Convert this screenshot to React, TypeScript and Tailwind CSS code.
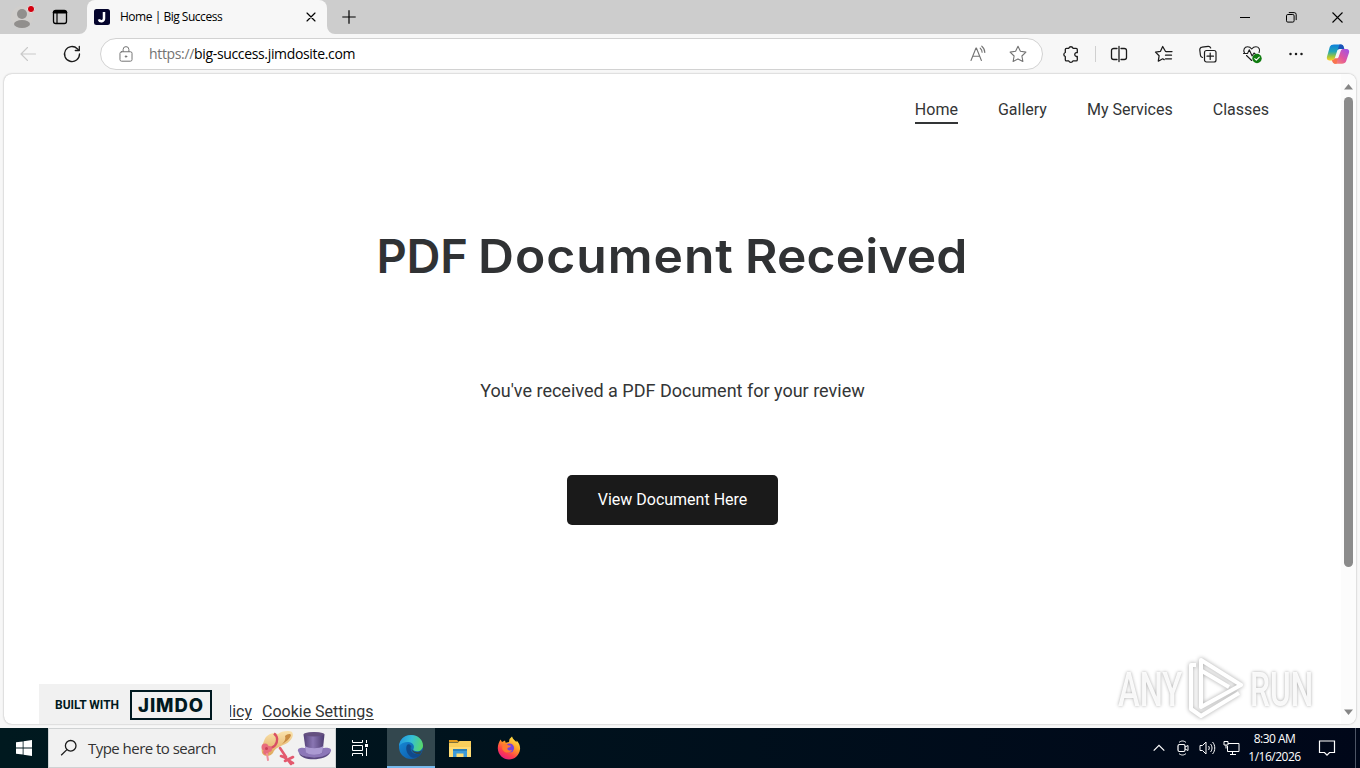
import React from 'react';

interface NavItem {
    label: string;
    active?: boolean;
}

const navItems: NavItem[] = [
    { label: 'Home', active: true },
    { label: 'Gallery' },
    { label: 'My Services' },
    { label: 'Classes' },
];

interface IconProps {
    children: React.ReactNode;
    size?: number;
    className?: string;
}

// Thin outlined icon on a 20px grid
const Icon: React.FC<IconProps> = ({ children, size = 20, className = '' }) => (
    <svg
        width={size}
        height={size}
        viewBox="0 0 20 20"
        fill="none"
        stroke="currentColor"
        strokeWidth="1.1"
        strokeLinecap="round"
        strokeLinejoin="round"
        className={`shrink-0 ${className}`}
    >
        {children}
    </svg>
);

const TitleBar: React.FC = () => (
    <div className="flex h-[34px] bg-[#cdcdcd] text-black">
        <div className="flex w-[87px] items-center">
            <svg width="44" height="34" viewBox="0 0 44 34" className="shrink-0">
                <circle cx="22" cy="17" r="11" fill="#d0cecc" />
                <circle cx="22" cy="14" r="5" fill="#918f8d" />
                <ellipse cx="22" cy="24" rx="8" ry="4" fill="#918f8d" />
                <circle cx="31" cy="9" r="3.6" fill="#d3000f" stroke="#e6e0df" strokeWidth="1" />
            </svg>
            <Icon className="ml-[6px]">
                <rect x="3.5" y="3.5" width="13" height="13" rx="2.2" strokeWidth="1.3" />
                <path d="M4 5.3h12" strokeWidth="2.4" />
                <path d="M7 6v10" strokeWidth="1.2" />
            </Icon>
        </div>
        <div className="relative flex w-[240px] items-center rounded-t-lg bg-[#f7f7f7] pl-[7px]">
            <svg width="8" height="8" viewBox="0 0 8 8" className="absolute -left-2 bottom-0">
                <path d="M8 0v8H0a8 8 0 0 0 8-8z" fill="#f7f7f7" />
            </svg>
            <svg width="8" height="8" viewBox="0 0 8 8" className="absolute -right-2 bottom-0">
                <path d="M0 0v8h8a8 8 0 0 1-8-8z" fill="#f7f7f7" />
            </svg>
            <svg width="16" height="16" viewBox="0 0 16 16" className="shrink-0">
                <rect width="16" height="16" rx="2.5" fill="#05052d" />
                <path d="M10 3v6.6a2.6 2.6 0 0 1-5.1.7" fill="none" stroke="#fff" strokeWidth="2.5" />
            </svg>
            <span className="ml-[10px] w-[180px] font-['Open_Sans',sans-serif] text-[12px] leading-4 tracking-[-0.48px] whitespace-nowrap">Home | Big Success</span>
            <Icon size={10} className="ml-[6px]">
                <path d="M2 2l16 16M18 2L2 18" strokeWidth="2.3" />
            </Icon>
        </div>
        <div className="flex w-[43px] items-center justify-center">
            <svg width="14" height="14" viewBox="0 0 14 14" stroke="currentColor" strokeWidth="1.2">
                <path d="M7 .3v13.4M.3 7h13.4" />
            </svg>
        </div>
        <div className="ml-auto flex">
            <div className="flex w-[46px] items-center justify-center">
                <svg width="10" height="10" viewBox="0 0 10 10"><path d="M0 5.5h10" stroke="#000" /></svg>
            </div>
            <div className="flex w-[46px] items-center justify-center">
                <svg width="11" height="11" viewBox="0 0 11 11" fill="none" stroke="#000">
                    <rect x=".5" y="2.5" width="7.6" height="7.6" rx="1.3" />
                    <path d="M2.8.6h5.4a2 2 0 0 1 2 2v5.5" />
                </svg>
            </div>
            <div className="flex w-[46px] items-center justify-center">
                <svg width="11" height="11" viewBox="0 0 11 11" stroke="#000" strokeWidth="1.1"><path d="M.5.5l10 10M10.5.5l-10 10" /></svg>
            </div>
        </div>
    </div>
);

const CopilotLogo: React.FC = () => (
    <svg width="24" height="22" viewBox="0 0 24 24" preserveAspectRatio="none">
        <defs>
            <linearGradient id="cpA" x1="0" y1="0" x2="0" y2="1">
                <stop offset="0" stopColor="#0d7fdd" />
                <stop offset=".45" stopColor="#24a7b5" />
                <stop offset=".75" stopColor="#9dc63c" />
                <stop offset="1" stopColor="#ffd02a" />
            </linearGradient>
            <linearGradient id="cpB" x1="1" y1="0" x2="0" y2="1">
                <stop offset="0" stopColor="#9a52ee" />
                <stop offset=".5" stopColor="#e0559f" />
                <stop offset="1" stopColor="#ff9461" />
            </linearGradient>
        </defs>
        <path d="M8 1.5h7c1.3 0 2 .8 2.4 2l.9 3h-4.7c-1.3 0-2 .7-2.4 2L8.7 17c-.5 1.5-1.5 2-3 2H3.300C1 19 .5 17 1 15L3.800 4.200C4.300 2.400 6 1.500 8 1.500z" fill="url(#cpA)" />
        <path d="M13.500 1.500H15c1.300 0 2 .8 2.400 2l.9 3h-4.700c-.9 0-1.600.4-2 1.200z" fill="#1b52b8" />
        <path d="M16 22.500H9c-1.300 0-2-.8-2.400-2L6 18.800c1.400 0 2.300-.6 2.700-1.800h1.600c1.300 0 2-.7 2.400-2l2-6.300c.5-1.500 1.500-2.200 3-2.200h2.800c2.400 0 3 2 2.500 4l-2.800 9c-.6 2-2.200 3-4.200 3z" fill="url(#cpB)" />
        <path d="M10.500 22.500H9c-1.300 0-2-.8-2.400-2L6 18.800c1.400 0 2.300-.6 2.700-1.800h3.100z" fill="#f9744f" />
    </svg>
);

const Toolbar: React.FC = () => (
    <div className="flex h-[40px] items-center bg-[#f7f7f7] text-[#1b1b1b]">
        <div className="flex w-[56px] justify-center text-[#c9c9c9]">
            <Icon>
                <path d="M17.500 10H3M9.500 3.500L3 10l6.500 6.500" />
            </Icon>
        </div>
        <div className="flex w-[44px] pl-[6px]">
            <Icon>
                <path d="M17.500 10a7.500 7.500 0 1 1-2.200-5.300L17 6.400" strokeWidth="1.300" />
                <path d="M17.300 2.500v4h-4" strokeWidth="1.300" />
            </Icon>
        </div>
        <div className="flex h-[32px] w-[943px] items-center rounded-full border border-[#d2d2d2] bg-white pl-[16px] text-[#737373]">
            <Icon size={18}>
                <rect x="3.300" y="7.500" width="13.400" height="10.500" rx="1.800" />
                <path d="M6.800 7.200V5a3.200 3.200 0 0 1 6.400 0v2.200" />
                <circle cx="10" cy="12.800" r=".8" fill="currentColor" />
            </Icon>
            <div className="ml-[14px] font-['Open_Sans',sans-serif] text-[14px] leading-5 tracking-[-0.34px] whitespace-nowrap">
                https://<span className="text-black">big-success.jimdosite.com</span>
            </div>
            <div className="ml-auto flex items-center gap-5 pr-[14px]">
                <Icon>
                    <path d="M3 16.500L8 4h.4l5 12.500M4.800 12.300h6.800" />
                    <path d="M12.200 4.200c1.300 1 1.900 2.300 1.900 4M13.800 2.200c2 1.600 3 3.700 3 6.300" />
                </Icon>
                <Icon>
                    <path d="M10 2.300l2.400 5 5.500.8-4 3.900 1 5.500-4.900-2.600-4.900 2.600 1-5.500-4-3.900 5.500-.8z" />
                </Icon>
            </div>
        </div>
        <div className="ml-[6px] flex w-[46px] pl-[12px]">
            <Icon>
                <path d="M5.500 4.300h2.300a2.200 2.200 0 0 1 4.200 0h3.100c.7 0 1.200.5 1.200 1.200v3.200h-1.200a2 2 0 0 0 0 3.800h1.200v3.200c0 .7-.5 1.200-1.200 1.200h-3.200a2.200 2.200 0 0 1-4.100 0H5.500c-.7 0-1.200-.5-1.200-1.200v-3.200a2.100 2.100 0 0 1 0-4V5.500c0-.7.5-1.200 1.200-1.200z" strokeWidth="1.300" />
            </Icon>
        </div>
        <div className="h-4 w-px bg-[#d0d0d0]" />
        <div className="flex w-[46px] justify-center">
            <Icon>
                <path d="M8 4.500H4.800C3.500 4.500 2.500 5.300 2.500 6.500v7c0 1.200 1 2 2.300 2H8M12 4.500h3.200c1.300 0 2.300.8 2.300 2v7c0 1.200-1 2-2.300 2H12M10 2.500v15" strokeWidth="1.300" />
            </Icon>
        </div>
        <div className="flex w-[44px] justify-center">
            <Icon>
                <path d="M12.800 7.500l-1.400-.2L8.700 2.500 6.500 7.300l-5 .8 3.600 3.700-.8 5.400 4.400-2.400 1.500.8" strokeWidth="1.250" />
                <path d="M12 7.500h6M11.500 11.200h6M11.500 14.800h6" strokeWidth="1.250" />
            </Icon>
        </div>
        <div className="flex w-[44px] justify-center">
            <Icon>
                <rect x="6.500" y="6.500" width="11.500" height="11.500" rx="2" strokeWidth="1.200" />
                <path d="M4.500 13.500A2.800 2.800 0 0 1 2.400 11L1.800 6a2.600 2.600 0 0 1 2.300-2.900l6-.8c1.200-.1 2.100.5 2.600 1.700M12.200 9v6.500M9 12.200h6.500" strokeWidth="1.200" />
            </Icon>
        </div>
        <div className="flex w-[44px] justify-center">
            <Icon>
                <path d="M2.500 9C.8 5.700 2.500 2.800 5.500 2.800c2 0 3.300 1 4.200 2.200 1-1.300 2.200-2.200 4.200-2.200 3 0 4.500 2.800 3.200 5.700M4.500 11.500l5.200 5M1.500 9.500h4l1.800-3.700 2.800 6.200 1.900-3 1.200 1" />
                <circle cx="15" cy="14.500" r="4.700" fill="#107c10" stroke="none" />
                <path d="M12.800 14.600l1.500 1.500 3-3" stroke="#fff" />
            </Icon>
        </div>
        <div className="flex w-[44px] justify-center">
            <Icon>
                <g fill="currentColor" stroke="none">
                    <circle cx="4.500" cy="10" r="1.250" />
                    <circle cx="10" cy="10" r="1.250" />
                    <circle cx="15.500" cy="10" r="1.250" />
                </g>
            </Icon>
        </div>
        <div className="flex w-[40px] justify-center">
            <CopilotLogo />
        </div>
    </div>
);

const BuiltWithBadge: React.FC = () => (
    <div className="absolute bottom-0 left-[35px] flex h-[40px] w-[191px] items-center bg-[#f1f1f1] pt-[2px] pl-[16px] text-[#001920]">
        <span className="w-[75px] font-['Roboto',sans-serif] text-[12px] font-bold whitespace-nowrap">BUILT WITH</span>
        <span className="flex h-[30px] w-[82px] items-center justify-center border-2 border-[#001920] pt-px font-['Inter',sans-serif] text-[18.500px] leading-none font-extrabold tracking-[0.9px]">
            JIMDO
        </span>
    </div>
);

const Watermark: React.FC = () => (
    <div className="absolute right-[42px] bottom-[4px] flex h-[64px] w-[196px] items-center justify-between font-['Roboto',sans-serif] text-[48px] leading-none font-medium text-white/90 [text-shadow:0_0_4px_rgba(0,0,0,0.35)]">
        <span className="w-[64px] origin-left scale-x-[0.68] pt-[3px]">ANY</span>
        <svg width="62" height="64" viewBox="0 0 62 64" fill="none" stroke="#fff" strokeWidth="4" strokeLinejoin="round" className="shrink-0 drop-shadow-[0_0_2px_rgba(0,0,0,0.35)]">
            <path d="M16 4l40 25L16 51z" />
            <path d="M17 15l27 16" />
            <path d="M11 9H6v44l10 7 38-23" />
        </svg>
        <span className="w-[64px] origin-left scale-x-[0.66] pt-[3px]">RUN</span>
    </div>
);

const Page: React.FC = () => (
    <div className="relative mx-[4px] flex h-[650px] overflow-hidden rounded-lg bg-white font-['Roboto',sans-serif] text-[#333536] shadow-[0_0_2px_rgba(0,0,0,0.35)]">
        <main className="relative flex w-[1337px] flex-col items-center">
            <nav className="flex h-[72px] w-full justify-end gap-10 pt-[24px] pr-[72px] text-[16px] leading-6">
                {navItems.map(item => (
                    <a
                        key={item.label}
                        className={`h-[26px] whitespace-nowrap ${item.active ? 'border-b-2 border-[#333536]' : ''}`}
                    >
                        {item.label}
                    </a>
                ))}
            </nav>
            <h1 className="mt-[80px] flex pl-[2px] font-['Inter',sans-serif] text-[47px] leading-[60px] font-semibold whitespace-nowrap text-[#303234]">
                <span className="w-[103px] pl-[2px] tracking-[-0.3px]">PDF</span>
                <span className="w-[267px] origin-left scale-x-[1.06] tracking-[0.9px]">Document</span>
                <span className="w-[228px] origin-left scale-x-[1.06] tracking-[0.1px]">Received</span>
            </h1>
            <p className="mt-[91px] text-[18px] leading-7 whitespace-nowrap">You've received a PDF Document for your review</p>
            <button className="mt-[70px] h-[50px] w-[211px] rounded-[5px] bg-[#1a1a1a] text-[16px] text-white">
                View Document Here
            </button>
            <footer className="mt-auto flex w-full gap-[10px] text-[16px] leading-6 underline underline-offset-2">
                <a className="w-[248px] text-right whitespace-nowrap">licy</a>
                <a className="whitespace-nowrap">Cookie Settings</a>
            </footer>
            <BuiltWithBadge />
        </main>
        <div className="flex w-[15px] flex-col items-center bg-[#fcfcfc] pt-[10px] pb-[9px]">
            <svg width="9" height="6" viewBox="0 0 9 6"><path d="M4.500 0L9 5.500H0z" fill="#858585" /></svg>
            <div className="mt-[7px] h-[470px] w-[9px] rounded-full bg-[#8b8b8b]" />
            <svg width="9" height="6" viewBox="0 0 9 6" className="mt-auto"><path d="M4.500 6L9 .5H0z" fill="#858585" /></svg>
        </div>
        <Watermark />
    </div>
);

const SearchHats: React.FC = () => (
    <svg width="74" height="38" viewBox="0 0 74 38">
        <defs>
            <linearGradient id="hat" x1="0" x2="1">
                <stop offset="0" stopColor="#534076" />
                <stop offset=".45" stopColor="#8a76b3" />
                <stop offset="1" stopColor="#4d3b70" />
            </linearGradient>
            <linearGradient id="straw" x1="0" y1="0" x2="0" y2="1">
                <stop offset="0" stopColor="#fae3ae" />
                <stop offset="1" stopColor="#dea758" />
            </linearGradient>
        </defs>
        <path d="M4 12c2-7 9-9 14-7 3-3 11-4 14-2 3 4-2 11-9 13-4 2-8 3-10 8-3 4-9 4-11 0-1-3 0-8 2-12z" fill="url(#straw)" />
        <path d="M25 7c2-2 5-3 6-1-1 4-5 7-9 9 3-3 4-5 3-8z" fill="#c98c42" />
        <path d="M14 4.500c4 3 4 8 1 12-2 2-5 3-8 3" fill="none" stroke="#d94f64" strokeWidth="2.400" />
        <g fill="#e86c7c">
            <circle cx="5" cy="18" r="3.500" />
            <circle cx="9" cy="20" r="3" />
            <circle cx="6" cy="23" r="2.800" />
        </g>
        <circle cx="6.500" cy="19.500" r="1.500" fill="#c93f56" />
        <path d="M7 25l1 6" fill="none" stroke="#f0909c" strokeWidth="2" strokeLinecap="round" />
        <path d="M20 19l6 9M25 29l8 5M33 28l-8 4M21 27l5 2M28 31l3 4" fill="none" stroke="#e3596e" strokeWidth="2.600" strokeLinecap="round" />
        <path d="M38 22c-1-3 4-4 6-3h20c3-1 8 0 7 3-2 9-31 9-33 0z" fill="#8c77b8" />
        <path d="M39 24c6 6 26 6 31-1-2 9-29 10-31 1z" fill="#5a4880" />
        <path d="M43.500 5.500c5-3 16-3 21 0l-2 18c-3 3-13 3-16.500 0z" fill="url(#hat)" />
        <path d="M44.800 17c5 3 14 3 18.500 0l-.9 6.500c-3 3-13 3-16.500 0z" fill="#ab9ad2" />
        <ellipse cx="54" cy="5.300" rx="10.500" ry="2.200" fill="#655080" />
    </svg>
);

const EdgeLogo: React.FC = () => (
    <svg width="26" height="26" viewBox="0 0 26 26">
        <defs>
            <linearGradient id="edgeTop" x1="0" x2="1" y1=".3" y2=".5">
                <stop offset="0" stopColor="#2196df" />
                <stop offset=".5" stopColor="#35bfd5" />
                <stop offset="1" stopColor="#58d76a" />
            </linearGradient>
            <linearGradient id="edgeBottom" x1="0" y1="0" x2="1" y2="1">
                <stop offset="0" stopColor="#1790db" />
                <stop offset="1" stopColor="#0c51a1" />
            </linearGradient>
        </defs>
        <circle cx="13" cy="13" r="12" fill="url(#edgeBottom)" />
        <path d="M1 12C1.500 5.500 6.500 1 13 1c7 0 12 5 12 10.500 0 3.500-2.700 5.800-6 5.800-2.800 0-4.300-1-3.600-2.200C17 12 15 8 10 8c-4 0-7 1.500-9 4z" fill="url(#edgeTop)" />
        <path d="M9 11c-2 4 0 10 5 12.500 4 1 8-1 9.500-4-8 2.500-12-2-10.500-7.500C12 10 10 10 9 11z" fill="#114a8b" />
        <path d="M13.500 11c-1.500 3 1 7 5 7 2.500 0 4.500-.8 5.500-1.800-.4 1.500-1 2.800-2 3.800-5 .8-10-2.500-8.500-9z" fill="#31464e" />
    </svg>
);

const FirefoxLogo: React.FC = () => (
    <svg width="24" height="24" viewBox="0 0 24 24">
        <defs>
            <linearGradient id="fox" x1=".8" y1="0" x2=".2" y2="1">
                <stop offset="0" stopColor="#fff04a" />
                <stop offset=".4" stopColor="#ff9826" />
                <stop offset=".7" stopColor="#ff3f4b" />
                <stop offset="1" stopColor="#e31587" />
            </linearGradient>
        </defs>
        <path d="M3.500 3.500L5 6l3-1.500.7 2.200L12 6l.5-3L15 .5c1 3 3 4 4.500 5.500l.2-1.500c2.300 2.500 3.800 5.500 3.300 9C22.200 19.500 17.500 23.500 12 23.500S1 19 .8 12.500C.7 9 2 6 3.500 3.500z" fill="url(#fox)" />
        <circle cx="12.500" cy="12" r="4.600" fill="#7542de" />
        <path d="M5.500 9c2-1.700 4-1.500 5.500.3l3 .4c-.6 2-2.500 1.500-3.500 2.500-.7 2 2 3 4.500 1.500-1 4-8 4-9.800-.7z" fill="#ff7a30" />
    </svg>
);

const Taskbar: React.FC = () => (
    <div className="flex h-[40px] bg-gradient-to-r from-[#00191f] to-[#000719] font-['Open_Sans',sans-serif] text-white">
        <div className="flex w-[48px] items-center justify-center">
            <svg width="16" height="16" viewBox="0 0 16 16" fill="#fff">
                <path d="M0 2.300l6.700-.9v6.200H0zM7.500 1.300L16 0v7.600H7.500zM0 8.400h6.700v6.200L0 13.700zM7.500 8.400H16V16l-8.500-1.200z" />
            </svg>
        </div>
        <div className="flex w-[288px] items-center border border-[#cfd2d3] bg-[#f1f1f1] pl-[11px] text-[#333]">
            <svg width="18" height="18" viewBox="0 0 18 18" fill="none" stroke="#1b1b1b" strokeWidth="1.300">
                <circle cx="10.700" cy="6.800" r="5.300" />
                <path d="M6.900 10.600L1.200 16.300" />
            </svg>
            <span className="ml-[10px] text-[15px] tracking-[-0.53px] whitespace-nowrap">Type here to search</span>
            <div className="ml-auto pr-px">
                <SearchHats />
            </div>
        </div>
        <div className="flex w-[51px] items-center justify-center">
            <svg width="18" height="16" viewBox="0 0 18 16" fill="none" stroke="#fff" className="mr-[3px]">
                <path d="M1.500 0v2.500h10V0M1.500 16v-2.500h10V16M1.500 5.500h10v5h-10zM15.500 0v3M15.500 8v8" />
                <path d="M14 4h3v3h-3z" fill="#fff" stroke="none" />
            </svg>
        </div>
        <div className="flex w-[48px] items-center justify-center border-b-2 border-[#76b9ed] bg-[#33474e]">
            <EdgeLogo />
        </div>
        <div className="flex w-[49px] items-center justify-center">
            <svg width="22" height="19" viewBox="0 0 22 19">
                <path d="M0 1h8l2 2H0z" fill="#e09a1c" />
                <path d="M0 3.500h9l1.500-1.500H22v16H0z" fill="#f9cf5c" />
                <path d="M0 8h22v10H0z" fill="#ffdc75" />
                <path d="M4 10h14v8h-3.500v-3.500h-7V18H4z" fill="#3e9bd9" />
                <path d="M4 10h14v2H4z" fill="#297fb9" />
            </svg>
        </div>
        <div className="flex w-[49px] items-center justify-center">
            <FirefoxLogo />
        </div>
        <div className="ml-auto flex items-center">
            <svg width="12" height="8" viewBox="0 0 12 8" fill="none" stroke="#fff" strokeWidth="1.200" className="mr-[12px]"><path d="M.7 6.700L6 1.300l5.300 5.400" /></svg>
            <svg width="12" height="16" viewBox="0 0 12 16" fill="none" stroke="#fff" className="mr-[10px]">
                <rect x="1" y="4.500" width="7" height="7" rx="1.500" strokeWidth="1.200" />
                <path d="M8 7l3-1.500v5L8 9M2 2.500C4 .5 7 .5 9 2.500M2 13.500c2 2 5 2 7 0" />
            </svg>
            <svg width="18" height="16" viewBox="0 0 18 16" fill="none" stroke="#fff" className="mr-[6px]">
                <path d="M1 5.500h2.500L7 2v12l-3.500-3.500H1z" />
                <path d="M9.500 6c1 1.200 1 2.800 0 4M11.500 4c2 2.200 2 5.800 0 8M13.500 2c3 3.200 3 8.800 0 12" />
            </svg>
            <svg width="17" height="16" viewBox="0 0 17 16" fill="none" stroke="#fff" className="mr-[6px]">
                <path d="M5 3.500h11v8H4.500V6M7 14.500h6M9.500 11.500v3" />
                <path d="M1 1.500h4v3.500H1zM3 5v3.500" />
            </svg>
            <div className="flex w-[57px] flex-col items-center text-[12px] leading-[18px] tracking-[-0.5px] whitespace-nowrap">
                <span>8:30 AM</span>
                <span>1/16/2026</span>
            </div>
            <svg width="18" height="18" viewBox="0 0 18 18" fill="none" stroke="#fff" strokeWidth="1.200" className="mr-[19px] ml-[15px]">
                <path d="M1.500 2h15v11.500h-5L9 16.200l-2.500-2.700h-5z" />
            </svg>
            <div className="mr-[4px] h-[40px] w-px bg-[#4d5565]" />
        </div>
    </div>
);

const App: React.FC = () => {
    return (
        <div className="flex h-[768px] w-[1360px] flex-col overflow-hidden bg-[#f7f7f7]">
            <TitleBar />
            <Toolbar />
            <Page />
            <div className="h-[4px]" />
            <Taskbar />
        </div>
    );
};

export default App;
